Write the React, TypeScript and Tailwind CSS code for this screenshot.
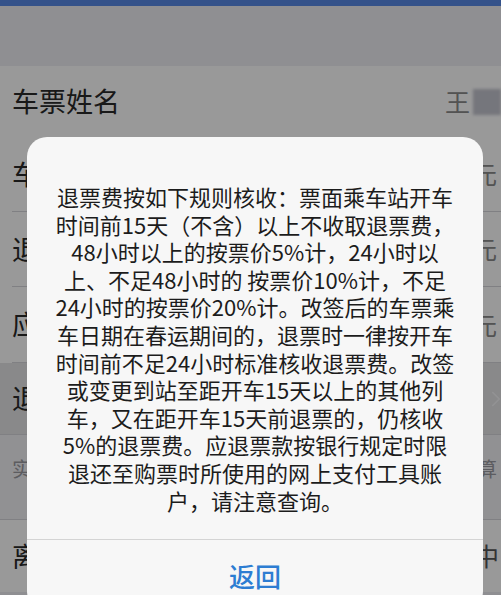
import { ChevronRight } from "lucide-react";

const lines = [
  "退票费按如下规则核收：票面乘车站开车",
  "时间前15天（不含）以上不收取退票费，",
  "48小时以上的按票价5%计，24小时以",
  "上、不足48小时的 按票价10%计，不足",
  "24小时的按票价20%计。改签后的车票乘",
  "车日期在春运期间的，退票时一律按开车",
  "时间前不足24小时标准核收退票费。改签",
  "或变更到站至距开车15天以上的其他列",
  "车，又在距开车15天前退票的，仍核收",
  "5%的退票费。应退票款按银行规定时限",
  "退还至购票时所使用的网上支付工具账",
  "户，请注意查询。",
];

function Row({ label, value, h }: { label: string; value: string; h: string }) {
  return (
    <div className="bg-white pl-3">
      <div className={`flex items-center justify-between border-b border-[#d6d6da] pr-[4px] ${h}`}>
        <span className="text-[27px] text-[#2a2a2a]">{label}</span>
        <span className="text-[25px] text-[#8a8a8a]">{value}</span>
      </div>
    </div>
  );
}

export default function App() {
  return (
    <div className="relative h-[595px] w-[501px] overflow-hidden bg-[#efeff4] font-['Noto_Sans_CJK_SC',sans-serif]">
      <div className="h-[6px] bg-[#5889e6]" />
      <div className="h-[60px] bg-[#efeff4]" />

      <div className="bg-white pl-3">
        <div className="flex h-[71px] items-center justify-between">
          <span className="text-[27px] text-[#2a2a2a]">车票姓名</span>
          <div className="flex items-center gap-[3px]">
            <span className="text-[25px] text-[#8a8a8a]">王</span>
            <div className="h-[26px] w-[28px] bg-[#c4c5cf] blur-[1.5px]" />
          </div>
        </div>
      </div>
      <Row label="车票票价" value="248.5元" h="h-[75px]" />
      <Row label="退票手续费" value="12.5元" h="h-[75px]" />
      <Row label="应退票款" value="236.0元" h="h-[76px]" />
      <div className="flex h-[72px] items-center justify-between border-b border-[#d6d6da] bg-[#e4e4e6] pl-3 pr-0">
        <span className="text-[27px] text-[#2a2a2a]">退票费核收规则</span>
        <ChevronRight className="h-[26px] w-[26px] translate-x-[8px] stroke-[1.5] text-[#f4f4f6]" />
      </div>
      <div className="flex h-[85px] items-start justify-between border-b border-[#d6d6da] bg-[#f2f2f6] pl-3 pr-[4px] pt-[19px]">
        <span className="text-[20px] text-[#9a9aa0]">实际退款金额以银行到账为准</span>
        <span className="text-[20px] text-[#9a9aa0]">计算</span>
      </div>
      <div className="flex h-[72px] items-center justify-between bg-white pl-3 pr-[2px]">
        <span className="text-[27px] text-[#2a2a2a]">离线退票</span>
        <span className="text-[25px] text-[#555555]">处理中</span>
      </div>

      <div className="absolute inset-0 bg-black/40" />

      <div className="absolute left-[27px] top-[137px] w-[456px] rounded-[20px] bg-[#f7f7f7]">
        <div className="pb-[25px] pt-[46px] text-center text-[22px] leading-[27.6px] text-[#1c1c1c]">
          {lines.map((l) => (
            <div className="whitespace-pre" key={l}>
              {l}
            </div>
          ))}
        </div>
        <div className="flex h-[72px] items-center justify-center border-t border-[#d4d4d4]">
          <span className="text-[26px] font-medium text-[#2d7dd2]">返回</span>
        </div>
      </div>
    </div>
  );
}
